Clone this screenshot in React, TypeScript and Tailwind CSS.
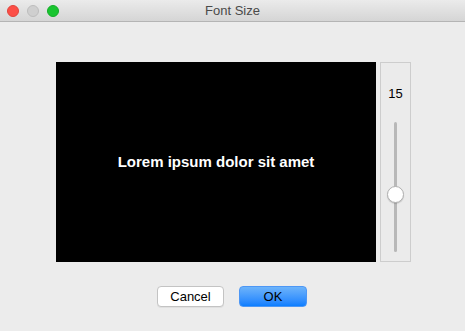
export default function App() {
  return (
    <div className="w-[465px] h-[331px] bg-[#ececec] flex flex-col overflow-hidden" style={{ fontFamily: '"Liberation Sans", Arial, sans-serif' }}>
      <div className="relative h-[22px] shrink-0 bg-gradient-to-b from-[#ebebeb] to-[#d5d5d5] border-b border-[#b4b4b4] flex items-center justify-center">
        <div className="absolute left-[7px] top-[5px] flex gap-[8px]">
          <div className="w-[12px] h-[12px] rounded-full bg-[#fc4e46] border border-[#e0443c]" />
          <div className="w-[12px] h-[12px] rounded-full bg-[#cfcfcf] border border-[#bdbdbd]" />
          <div className="w-[12px] h-[12px] rounded-full bg-[#19c530] border border-[#14ad28]" />
        </div>
        <span className="text-[13px] text-[#4a4a4a]">Font Size</span>
      </div>
      <div className="flex pl-[56px] pt-[40px] gap-[4px]">
        <div className="w-[320px] h-[200px] bg-black flex items-center justify-center">
          <span className="text-white font-bold text-[15px]">Lorem ipsum dolor sit amet</span>
        </div>
        <div className="w-[31px] h-[200px] border border-[#cdcdcd] bg-[#ebebeb] flex flex-col items-center">
          <span className="mt-[23px] text-[13px] text-black leading-[16px]">15</span>
          <div className="relative mt-[20px] w-[3px] h-[130px] rounded-full bg-[#b8b8b8]">
            <div className="absolute left-[-7px] top-[64px] w-[17px] h-[17px] rounded-full bg-white border border-[#b0b0b0] shadow-[0_1px_1px_rgba(0,0,0,0.15)]" />
          </div>
        </div>
      </div>
      <div className="flex pl-[157px] pt-[24px] gap-[15px]">
        <button className="w-[67px] h-[21px] rounded-[4px] bg-white border border-[#c3c3c3] text-[13px] text-black shadow-[0_1px_0_rgba(0,0,0,0.05)]">Cancel</button>
        <button className="w-[68px] h-[21px] rounded-[4px] bg-gradient-to-b from-[#6cb3fa] to-[#087eff] border border-[#4d97f5] text-[13px] text-black">OK</button>
      </div>
    </div>
  );
}
